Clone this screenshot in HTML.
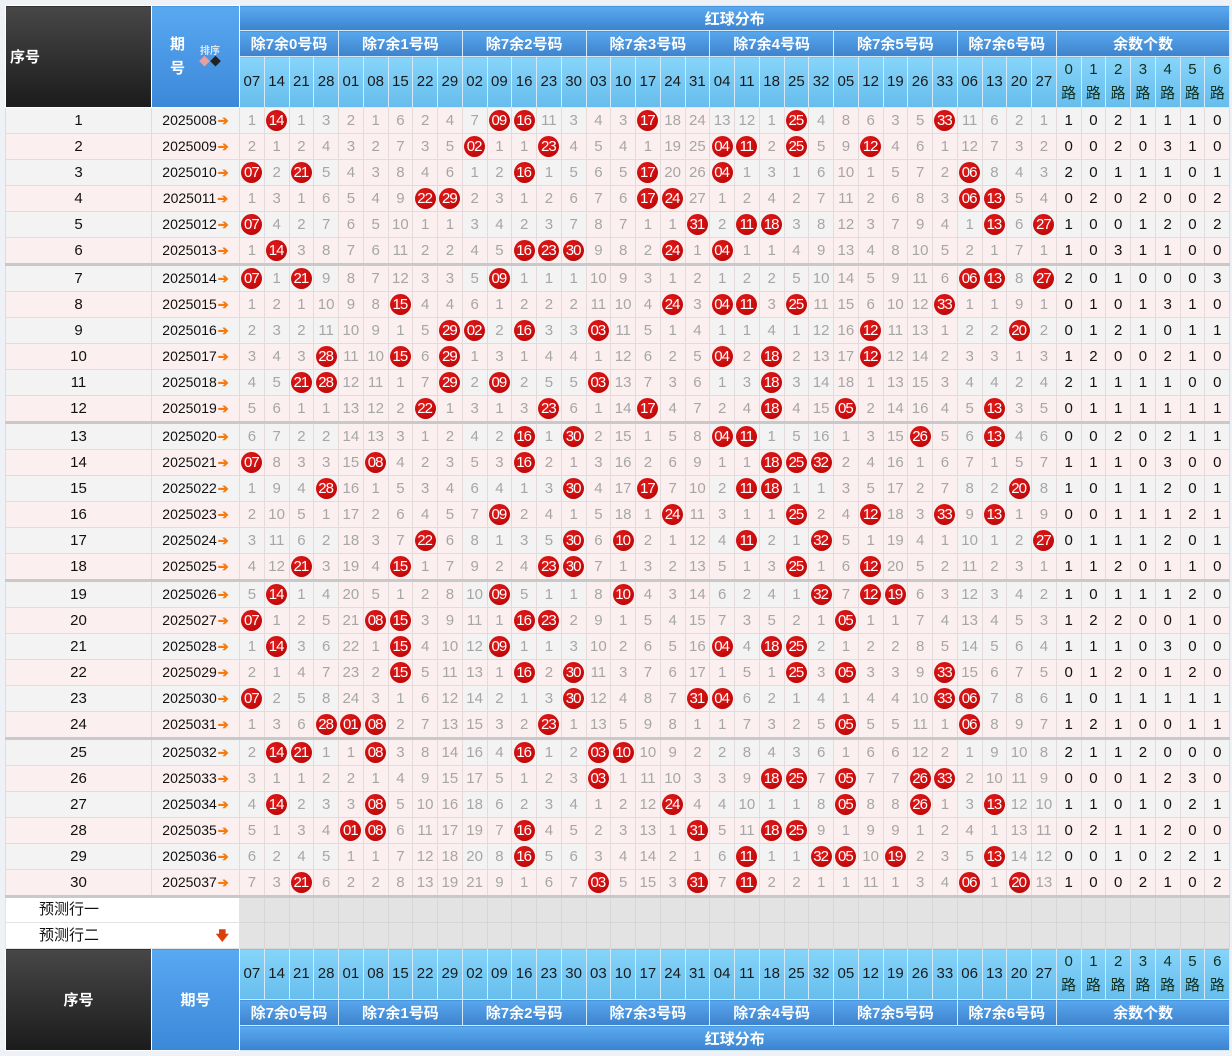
<!DOCTYPE html>
<html><head><meta charset="utf-8">
<style>
body{margin:0;background:#eef2f7;width:1232px;height:1056px;overflow:hidden;font-family:"Liberation Sans","Noto Sans CJK SC",sans-serif;position:relative}
table{position:absolute;left:5px;top:5px;border-collapse:collapse;table-layout:fixed;width:1224px}
td{padding:0;text-align:center;border:1px solid #e3dbdb;font-size:15px;color:#a6a6a6;white-space:nowrap;overflow:hidden;line-height:24px;background:#fcefef}
tbody tr{height:26px}
tr.o td{background:#f3f3f3}
tr.o td:nth-child(n+7):nth-child(-n+11),tr.o td:nth-child(n+17):nth-child(-n+21),tr.o td:nth-child(n+27):nth-child(-n+31){background:#fcefef}
td:nth-child(1){color:#111}
td:nth-child(2){color:#111;font-size:14px}
td:nth-child(n+36){color:#111}
tr.s td{border-bottom:3px solid #c9c9c9}
b.a{color:#f57a10;font-size:13px;font-weight:bold;margin-left:1px}
i{display:inline-block;width:21px;height:21px;border-radius:50%;background:radial-gradient(circle at 40% 35%,#e21c1c,#b50000);color:#fff;font-style:normal;font-size:15px;line-height:21px;letter-spacing:-1px;text-indent:-1px;vertical-align:middle}
th{padding:0;font-weight:bold;color:#fff;font-size:15px;border:1px solid #d6e9f8;white-space:nowrap}
th.k{background:linear-gradient(#474747,#1b1b1b);border-color:#fff;text-align:left;padding-left:4px}
th.q{background:linear-gradient(#58a8f2,#3c88d8);border-color:#fff}
th.t{background:linear-gradient(#5aaaf0,#3b82cf);height:24px}
th.g{background:linear-gradient(#58a7ee,#3d82cc);height:25px}
th.n{background:linear-gradient(#86d4fa,#66bdec);color:#1a1a1a;font-weight:normal;height:50px;line-height:24px}
th.n.c{color:#0f2f1f}
tr.p{height:26px}
tr.p td{background:#e3e3e3;border-color:#d6d6d6}
tr.p td.l{background:#fff;color:#111;text-align:left;padding-left:33px;border-color:#e3e3e3}
.dn{float:right;margin-right:10px;color:#d9400c;font-size:13px;font-weight:bold}
.qh{display:flex;align-items:center;justify-content:center;gap:14px}
.qh .v{line-height:24px;font-size:15px}
.so{font-size:10px;color:#dce6f2;line-height:11px;text-align:center;font-weight:bold}
.so span{font-size:11px}
</style></head><body>
<table>
<colgroup><col style="width:146px"><col style="width:88px"><col span="40" style="width:24.75px"></colgroup>
<thead>
<tr><th rowspan="3" class="k">序号</th><th rowspan="3" class="q"><div class="qh"><div class="v">期<br>号</div><div class="so">排序<br><span style="color:#e6a0a0">◆</span><span style="color:#222">◆</span></div></div></th><th colspan="40" class="t">红球分布</th></tr>
<tr><th colspan="4" class="g">除7余0号码</th><th colspan="5" class="g">除7余1号码</th><th colspan="5" class="g">除7余2号码</th><th colspan="5" class="g">除7余3号码</th><th colspan="5" class="g">除7余4号码</th><th colspan="5" class="g">除7余5号码</th><th colspan="4" class="g">除7余6号码</th><th colspan="7" class="g">余数个数</th></tr>
<tr><th class="n">07</th><th class="n">14</th><th class="n">21</th><th class="n">28</th><th class="n">01</th><th class="n">08</th><th class="n">15</th><th class="n">22</th><th class="n">29</th><th class="n">02</th><th class="n">09</th><th class="n">16</th><th class="n">23</th><th class="n">30</th><th class="n">03</th><th class="n">10</th><th class="n">17</th><th class="n">24</th><th class="n">31</th><th class="n">04</th><th class="n">11</th><th class="n">18</th><th class="n">25</th><th class="n">32</th><th class="n">05</th><th class="n">12</th><th class="n">19</th><th class="n">26</th><th class="n">33</th><th class="n">06</th><th class="n">13</th><th class="n">20</th><th class="n">27</th><th class="n c">0<br>路</th><th class="n c">1<br>路</th><th class="n c">2<br>路</th><th class="n c">3<br>路</th><th class="n c">4<br>路</th><th class="n c">5<br>路</th><th class="n c">6<br>路</th></tr>
</thead>
<tbody>
<tr class="o"><td>1</td><td>2025008<b class="a">➔</b></td><td>1</td><td><i>14</i></td><td>1</td><td>3</td><td>2</td><td>1</td><td>6</td><td>2</td><td>4</td><td>7</td><td><i>09</i></td><td><i>16</i></td><td>11</td><td>3</td><td>4</td><td>3</td><td><i>17</i></td><td>18</td><td>24</td><td>13</td><td>12</td><td>1</td><td><i>25</i></td><td>4</td><td>8</td><td>6</td><td>3</td><td>5</td><td><i>33</i></td><td>11</td><td>6</td><td>2</td><td>1</td><td>1</td><td>0</td><td>2</td><td>1</td><td>1</td><td>1</td><td>0</td></tr>
<tr><td>2</td><td>2025009<b class="a">➔</b></td><td>2</td><td>1</td><td>2</td><td>4</td><td>3</td><td>2</td><td>7</td><td>3</td><td>5</td><td><i>02</i></td><td>1</td><td>1</td><td><i>23</i></td><td>4</td><td>5</td><td>4</td><td>1</td><td>19</td><td>25</td><td><i>04</i></td><td><i>11</i></td><td>2</td><td><i>25</i></td><td>5</td><td>9</td><td><i>12</i></td><td>4</td><td>6</td><td>1</td><td>12</td><td>7</td><td>3</td><td>2</td><td>0</td><td>0</td><td>2</td><td>0</td><td>3</td><td>1</td><td>0</td></tr>
<tr class="o"><td>3</td><td>2025010<b class="a">➔</b></td><td><i>07</i></td><td>2</td><td><i>21</i></td><td>5</td><td>4</td><td>3</td><td>8</td><td>4</td><td>6</td><td>1</td><td>2</td><td><i>16</i></td><td>1</td><td>5</td><td>6</td><td>5</td><td><i>17</i></td><td>20</td><td>26</td><td><i>04</i></td><td>1</td><td>3</td><td>1</td><td>6</td><td>10</td><td>1</td><td>5</td><td>7</td><td>2</td><td><i>06</i></td><td>8</td><td>4</td><td>3</td><td>2</td><td>0</td><td>1</td><td>1</td><td>1</td><td>0</td><td>1</td></tr>
<tr><td>4</td><td>2025011<b class="a">➔</b></td><td>1</td><td>3</td><td>1</td><td>6</td><td>5</td><td>4</td><td>9</td><td><i>22</i></td><td><i>29</i></td><td>2</td><td>3</td><td>1</td><td>2</td><td>6</td><td>7</td><td>6</td><td><i>17</i></td><td><i>24</i></td><td>27</td><td>1</td><td>2</td><td>4</td><td>2</td><td>7</td><td>11</td><td>2</td><td>6</td><td>8</td><td>3</td><td><i>06</i></td><td><i>13</i></td><td>5</td><td>4</td><td>0</td><td>2</td><td>0</td><td>2</td><td>0</td><td>0</td><td>2</td></tr>
<tr class="o"><td>5</td><td>2025012<b class="a">➔</b></td><td><i>07</i></td><td>4</td><td>2</td><td>7</td><td>6</td><td>5</td><td>10</td><td>1</td><td>1</td><td>3</td><td>4</td><td>2</td><td>3</td><td>7</td><td>8</td><td>7</td><td>1</td><td>1</td><td><i>31</i></td><td>2</td><td><i>11</i></td><td><i>18</i></td><td>3</td><td>8</td><td>12</td><td>3</td><td>7</td><td>9</td><td>4</td><td>1</td><td><i>13</i></td><td>6</td><td><i>27</i></td><td>1</td><td>0</td><td>0</td><td>1</td><td>2</td><td>0</td><td>2</td></tr>
<tr class="s"><td>6</td><td>2025013<b class="a">➔</b></td><td>1</td><td><i>14</i></td><td>3</td><td>8</td><td>7</td><td>6</td><td>11</td><td>2</td><td>2</td><td>4</td><td>5</td><td><i>16</i></td><td><i>23</i></td><td><i>30</i></td><td>9</td><td>8</td><td>2</td><td><i>24</i></td><td>1</td><td><i>04</i></td><td>1</td><td>1</td><td>4</td><td>9</td><td>13</td><td>4</td><td>8</td><td>10</td><td>5</td><td>2</td><td>1</td><td>7</td><td>1</td><td>1</td><td>0</td><td>3</td><td>1</td><td>1</td><td>0</td><td>0</td></tr>
<tr class="o"><td>7</td><td>2025014<b class="a">➔</b></td><td><i>07</i></td><td>1</td><td><i>21</i></td><td>9</td><td>8</td><td>7</td><td>12</td><td>3</td><td>3</td><td>5</td><td><i>09</i></td><td>1</td><td>1</td><td>1</td><td>10</td><td>9</td><td>3</td><td>1</td><td>2</td><td>1</td><td>2</td><td>2</td><td>5</td><td>10</td><td>14</td><td>5</td><td>9</td><td>11</td><td>6</td><td><i>06</i></td><td><i>13</i></td><td>8</td><td><i>27</i></td><td>2</td><td>0</td><td>1</td><td>0</td><td>0</td><td>0</td><td>3</td></tr>
<tr><td>8</td><td>2025015<b class="a">➔</b></td><td>1</td><td>2</td><td>1</td><td>10</td><td>9</td><td>8</td><td><i>15</i></td><td>4</td><td>4</td><td>6</td><td>1</td><td>2</td><td>2</td><td>2</td><td>11</td><td>10</td><td>4</td><td><i>24</i></td><td>3</td><td><i>04</i></td><td><i>11</i></td><td>3</td><td><i>25</i></td><td>11</td><td>15</td><td>6</td><td>10</td><td>12</td><td><i>33</i></td><td>1</td><td>1</td><td>9</td><td>1</td><td>0</td><td>1</td><td>0</td><td>1</td><td>3</td><td>1</td><td>0</td></tr>
<tr class="o"><td>9</td><td>2025016<b class="a">➔</b></td><td>2</td><td>3</td><td>2</td><td>11</td><td>10</td><td>9</td><td>1</td><td>5</td><td><i>29</i></td><td><i>02</i></td><td>2</td><td><i>16</i></td><td>3</td><td>3</td><td><i>03</i></td><td>11</td><td>5</td><td>1</td><td>4</td><td>1</td><td>1</td><td>4</td><td>1</td><td>12</td><td>16</td><td><i>12</i></td><td>11</td><td>13</td><td>1</td><td>2</td><td>2</td><td><i>20</i></td><td>2</td><td>0</td><td>1</td><td>2</td><td>1</td><td>0</td><td>1</td><td>1</td></tr>
<tr><td>10</td><td>2025017<b class="a">➔</b></td><td>3</td><td>4</td><td>3</td><td><i>28</i></td><td>11</td><td>10</td><td><i>15</i></td><td>6</td><td><i>29</i></td><td>1</td><td>3</td><td>1</td><td>4</td><td>4</td><td>1</td><td>12</td><td>6</td><td>2</td><td>5</td><td><i>04</i></td><td>2</td><td><i>18</i></td><td>2</td><td>13</td><td>17</td><td><i>12</i></td><td>12</td><td>14</td><td>2</td><td>3</td><td>3</td><td>1</td><td>3</td><td>1</td><td>2</td><td>0</td><td>0</td><td>2</td><td>1</td><td>0</td></tr>
<tr class="o"><td>11</td><td>2025018<b class="a">➔</b></td><td>4</td><td>5</td><td><i>21</i></td><td><i>28</i></td><td>12</td><td>11</td><td>1</td><td>7</td><td><i>29</i></td><td>2</td><td><i>09</i></td><td>2</td><td>5</td><td>5</td><td><i>03</i></td><td>13</td><td>7</td><td>3</td><td>6</td><td>1</td><td>3</td><td><i>18</i></td><td>3</td><td>14</td><td>18</td><td>1</td><td>13</td><td>15</td><td>3</td><td>4</td><td>4</td><td>2</td><td>4</td><td>2</td><td>1</td><td>1</td><td>1</td><td>1</td><td>0</td><td>0</td></tr>
<tr class="s"><td>12</td><td>2025019<b class="a">➔</b></td><td>5</td><td>6</td><td>1</td><td>1</td><td>13</td><td>12</td><td>2</td><td><i>22</i></td><td>1</td><td>3</td><td>1</td><td>3</td><td><i>23</i></td><td>6</td><td>1</td><td>14</td><td><i>17</i></td><td>4</td><td>7</td><td>2</td><td>4</td><td><i>18</i></td><td>4</td><td>15</td><td><i>05</i></td><td>2</td><td>14</td><td>16</td><td>4</td><td>5</td><td><i>13</i></td><td>3</td><td>5</td><td>0</td><td>1</td><td>1</td><td>1</td><td>1</td><td>1</td><td>1</td></tr>
<tr class="o"><td>13</td><td>2025020<b class="a">➔</b></td><td>6</td><td>7</td><td>2</td><td>2</td><td>14</td><td>13</td><td>3</td><td>1</td><td>2</td><td>4</td><td>2</td><td><i>16</i></td><td>1</td><td><i>30</i></td><td>2</td><td>15</td><td>1</td><td>5</td><td>8</td><td><i>04</i></td><td><i>11</i></td><td>1</td><td>5</td><td>16</td><td>1</td><td>3</td><td>15</td><td><i>26</i></td><td>5</td><td>6</td><td><i>13</i></td><td>4</td><td>6</td><td>0</td><td>0</td><td>2</td><td>0</td><td>2</td><td>1</td><td>1</td></tr>
<tr><td>14</td><td>2025021<b class="a">➔</b></td><td><i>07</i></td><td>8</td><td>3</td><td>3</td><td>15</td><td><i>08</i></td><td>4</td><td>2</td><td>3</td><td>5</td><td>3</td><td><i>16</i></td><td>2</td><td>1</td><td>3</td><td>16</td><td>2</td><td>6</td><td>9</td><td>1</td><td>1</td><td><i>18</i></td><td><i>25</i></td><td><i>32</i></td><td>2</td><td>4</td><td>16</td><td>1</td><td>6</td><td>7</td><td>1</td><td>5</td><td>7</td><td>1</td><td>1</td><td>1</td><td>0</td><td>3</td><td>0</td><td>0</td></tr>
<tr class="o"><td>15</td><td>2025022<b class="a">➔</b></td><td>1</td><td>9</td><td>4</td><td><i>28</i></td><td>16</td><td>1</td><td>5</td><td>3</td><td>4</td><td>6</td><td>4</td><td>1</td><td>3</td><td><i>30</i></td><td>4</td><td>17</td><td><i>17</i></td><td>7</td><td>10</td><td>2</td><td><i>11</i></td><td><i>18</i></td><td>1</td><td>1</td><td>3</td><td>5</td><td>17</td><td>2</td><td>7</td><td>8</td><td>2</td><td><i>20</i></td><td>8</td><td>1</td><td>0</td><td>1</td><td>1</td><td>2</td><td>0</td><td>1</td></tr>
<tr><td>16</td><td>2025023<b class="a">➔</b></td><td>2</td><td>10</td><td>5</td><td>1</td><td>17</td><td>2</td><td>6</td><td>4</td><td>5</td><td>7</td><td><i>09</i></td><td>2</td><td>4</td><td>1</td><td>5</td><td>18</td><td>1</td><td><i>24</i></td><td>11</td><td>3</td><td>1</td><td>1</td><td><i>25</i></td><td>2</td><td>4</td><td><i>12</i></td><td>18</td><td>3</td><td><i>33</i></td><td>9</td><td><i>13</i></td><td>1</td><td>9</td><td>0</td><td>0</td><td>1</td><td>1</td><td>1</td><td>2</td><td>1</td></tr>
<tr class="o"><td>17</td><td>2025024<b class="a">➔</b></td><td>3</td><td>11</td><td>6</td><td>2</td><td>18</td><td>3</td><td>7</td><td><i>22</i></td><td>6</td><td>8</td><td>1</td><td>3</td><td>5</td><td><i>30</i></td><td>6</td><td><i>10</i></td><td>2</td><td>1</td><td>12</td><td>4</td><td><i>11</i></td><td>2</td><td>1</td><td><i>32</i></td><td>5</td><td>1</td><td>19</td><td>4</td><td>1</td><td>10</td><td>1</td><td>2</td><td><i>27</i></td><td>0</td><td>1</td><td>1</td><td>1</td><td>2</td><td>0</td><td>1</td></tr>
<tr class="s"><td>18</td><td>2025025<b class="a">➔</b></td><td>4</td><td>12</td><td><i>21</i></td><td>3</td><td>19</td><td>4</td><td><i>15</i></td><td>1</td><td>7</td><td>9</td><td>2</td><td>4</td><td><i>23</i></td><td><i>30</i></td><td>7</td><td>1</td><td>3</td><td>2</td><td>13</td><td>5</td><td>1</td><td>3</td><td><i>25</i></td><td>1</td><td>6</td><td><i>12</i></td><td>20</td><td>5</td><td>2</td><td>11</td><td>2</td><td>3</td><td>1</td><td>1</td><td>1</td><td>2</td><td>0</td><td>1</td><td>1</td><td>0</td></tr>
<tr class="o"><td>19</td><td>2025026<b class="a">➔</b></td><td>5</td><td><i>14</i></td><td>1</td><td>4</td><td>20</td><td>5</td><td>1</td><td>2</td><td>8</td><td>10</td><td><i>09</i></td><td>5</td><td>1</td><td>1</td><td>8</td><td><i>10</i></td><td>4</td><td>3</td><td>14</td><td>6</td><td>2</td><td>4</td><td>1</td><td><i>32</i></td><td>7</td><td><i>12</i></td><td><i>19</i></td><td>6</td><td>3</td><td>12</td><td>3</td><td>4</td><td>2</td><td>1</td><td>0</td><td>1</td><td>1</td><td>1</td><td>2</td><td>0</td></tr>
<tr><td>20</td><td>2025027<b class="a">➔</b></td><td><i>07</i></td><td>1</td><td>2</td><td>5</td><td>21</td><td><i>08</i></td><td><i>15</i></td><td>3</td><td>9</td><td>11</td><td>1</td><td><i>16</i></td><td><i>23</i></td><td>2</td><td>9</td><td>1</td><td>5</td><td>4</td><td>15</td><td>7</td><td>3</td><td>5</td><td>2</td><td>1</td><td><i>05</i></td><td>1</td><td>1</td><td>7</td><td>4</td><td>13</td><td>4</td><td>5</td><td>3</td><td>1</td><td>2</td><td>2</td><td>0</td><td>0</td><td>1</td><td>0</td></tr>
<tr class="o"><td>21</td><td>2025028<b class="a">➔</b></td><td>1</td><td><i>14</i></td><td>3</td><td>6</td><td>22</td><td>1</td><td><i>15</i></td><td>4</td><td>10</td><td>12</td><td><i>09</i></td><td>1</td><td>1</td><td>3</td><td>10</td><td>2</td><td>6</td><td>5</td><td>16</td><td><i>04</i></td><td>4</td><td><i>18</i></td><td><i>25</i></td><td>2</td><td>1</td><td>2</td><td>2</td><td>8</td><td>5</td><td>14</td><td>5</td><td>6</td><td>4</td><td>1</td><td>1</td><td>1</td><td>0</td><td>3</td><td>0</td><td>0</td></tr>
<tr><td>22</td><td>2025029<b class="a">➔</b></td><td>2</td><td>1</td><td>4</td><td>7</td><td>23</td><td>2</td><td><i>15</i></td><td>5</td><td>11</td><td>13</td><td>1</td><td><i>16</i></td><td>2</td><td><i>30</i></td><td>11</td><td>3</td><td>7</td><td>6</td><td>17</td><td>1</td><td>5</td><td>1</td><td><i>25</i></td><td>3</td><td><i>05</i></td><td>3</td><td>3</td><td>9</td><td><i>33</i></td><td>15</td><td>6</td><td>7</td><td>5</td><td>0</td><td>1</td><td>2</td><td>0</td><td>1</td><td>2</td><td>0</td></tr>
<tr class="o"><td>23</td><td>2025030<b class="a">➔</b></td><td><i>07</i></td><td>2</td><td>5</td><td>8</td><td>24</td><td>3</td><td>1</td><td>6</td><td>12</td><td>14</td><td>2</td><td>1</td><td>3</td><td><i>30</i></td><td>12</td><td>4</td><td>8</td><td>7</td><td><i>31</i></td><td><i>04</i></td><td>6</td><td>2</td><td>1</td><td>4</td><td>1</td><td>4</td><td>4</td><td>10</td><td><i>33</i></td><td><i>06</i></td><td>7</td><td>8</td><td>6</td><td>1</td><td>0</td><td>1</td><td>1</td><td>1</td><td>1</td><td>1</td></tr>
<tr class="s"><td>24</td><td>2025031<b class="a">➔</b></td><td>1</td><td>3</td><td>6</td><td><i>28</i></td><td><i>01</i></td><td><i>08</i></td><td>2</td><td>7</td><td>13</td><td>15</td><td>3</td><td>2</td><td><i>23</i></td><td>1</td><td>13</td><td>5</td><td>9</td><td>8</td><td>1</td><td>1</td><td>7</td><td>3</td><td>2</td><td>5</td><td><i>05</i></td><td>5</td><td>5</td><td>11</td><td>1</td><td><i>06</i></td><td>8</td><td>9</td><td>7</td><td>1</td><td>2</td><td>1</td><td>0</td><td>0</td><td>1</td><td>1</td></tr>
<tr class="o"><td>25</td><td>2025032<b class="a">➔</b></td><td>2</td><td><i>14</i></td><td><i>21</i></td><td>1</td><td>1</td><td><i>08</i></td><td>3</td><td>8</td><td>14</td><td>16</td><td>4</td><td><i>16</i></td><td>1</td><td>2</td><td><i>03</i></td><td><i>10</i></td><td>10</td><td>9</td><td>2</td><td>2</td><td>8</td><td>4</td><td>3</td><td>6</td><td>1</td><td>6</td><td>6</td><td>12</td><td>2</td><td>1</td><td>9</td><td>10</td><td>8</td><td>2</td><td>1</td><td>1</td><td>2</td><td>0</td><td>0</td><td>0</td></tr>
<tr><td>26</td><td>2025033<b class="a">➔</b></td><td>3</td><td>1</td><td>1</td><td>2</td><td>2</td><td>1</td><td>4</td><td>9</td><td>15</td><td>17</td><td>5</td><td>1</td><td>2</td><td>3</td><td><i>03</i></td><td>1</td><td>11</td><td>10</td><td>3</td><td>3</td><td>9</td><td><i>18</i></td><td><i>25</i></td><td>7</td><td><i>05</i></td><td>7</td><td>7</td><td><i>26</i></td><td><i>33</i></td><td>2</td><td>10</td><td>11</td><td>9</td><td>0</td><td>0</td><td>0</td><td>1</td><td>2</td><td>3</td><td>0</td></tr>
<tr class="o"><td>27</td><td>2025034<b class="a">➔</b></td><td>4</td><td><i>14</i></td><td>2</td><td>3</td><td>3</td><td><i>08</i></td><td>5</td><td>10</td><td>16</td><td>18</td><td>6</td><td>2</td><td>3</td><td>4</td><td>1</td><td>2</td><td>12</td><td><i>24</i></td><td>4</td><td>4</td><td>10</td><td>1</td><td>1</td><td>8</td><td><i>05</i></td><td>8</td><td>8</td><td><i>26</i></td><td>1</td><td>3</td><td><i>13</i></td><td>12</td><td>10</td><td>1</td><td>1</td><td>0</td><td>1</td><td>0</td><td>2</td><td>1</td></tr>
<tr><td>28</td><td>2025035<b class="a">➔</b></td><td>5</td><td>1</td><td>3</td><td>4</td><td><i>01</i></td><td><i>08</i></td><td>6</td><td>11</td><td>17</td><td>19</td><td>7</td><td><i>16</i></td><td>4</td><td>5</td><td>2</td><td>3</td><td>13</td><td>1</td><td><i>31</i></td><td>5</td><td>11</td><td><i>18</i></td><td><i>25</i></td><td>9</td><td>1</td><td>9</td><td>9</td><td>1</td><td>2</td><td>4</td><td>1</td><td>13</td><td>11</td><td>0</td><td>2</td><td>1</td><td>1</td><td>2</td><td>0</td><td>0</td></tr>
<tr class="o"><td>29</td><td>2025036<b class="a">➔</b></td><td>6</td><td>2</td><td>4</td><td>5</td><td>1</td><td>1</td><td>7</td><td>12</td><td>18</td><td>20</td><td>8</td><td><i>16</i></td><td>5</td><td>6</td><td>3</td><td>4</td><td>14</td><td>2</td><td>1</td><td>6</td><td><i>11</i></td><td>1</td><td>1</td><td><i>32</i></td><td><i>05</i></td><td>10</td><td><i>19</i></td><td>2</td><td>3</td><td>5</td><td><i>13</i></td><td>14</td><td>12</td><td>0</td><td>0</td><td>1</td><td>0</td><td>2</td><td>2</td><td>1</td></tr>
<tr class="s"><td>30</td><td>2025037<b class="a">➔</b></td><td>7</td><td>3</td><td><i>21</i></td><td>6</td><td>2</td><td>2</td><td>8</td><td>13</td><td>19</td><td>21</td><td>9</td><td>1</td><td>6</td><td>7</td><td><i>03</i></td><td>5</td><td>15</td><td>3</td><td><i>31</i></td><td>7</td><td><i>11</i></td><td>2</td><td>2</td><td>1</td><td>1</td><td>11</td><td>1</td><td>3</td><td>4</td><td><i>06</i></td><td>1</td><td><i>20</i></td><td>13</td><td>1</td><td>0</td><td>0</td><td>2</td><td>1</td><td>0</td><td>2</td></tr>
<tr class="p"><td colspan="2" class="l">预测行一</td><td></td><td></td><td></td><td></td><td></td><td></td><td></td><td></td><td></td><td></td><td></td><td></td><td></td><td></td><td></td><td></td><td></td><td></td><td></td><td></td><td></td><td></td><td></td><td></td><td></td><td></td><td></td><td></td><td></td><td></td><td></td><td></td><td></td><td></td><td></td><td></td><td></td><td></td><td></td><td></td></tr>
<tr class="p"><td colspan="2" class="l">预测行二<span class="dn">🡇</span></td><td></td><td></td><td></td><td></td><td></td><td></td><td></td><td></td><td></td><td></td><td></td><td></td><td></td><td></td><td></td><td></td><td></td><td></td><td></td><td></td><td></td><td></td><td></td><td></td><td></td><td></td><td></td><td></td><td></td><td></td><td></td><td></td><td></td><td></td><td></td><td></td><td></td><td></td><td></td><td></td></tr>
</tbody>
<tfoot>
<tr><th rowspan="3" class="k" style="text-align:center;padding:0">序号</th><th rowspan="3" class="q">期号</th><th class="n">07</th><th class="n">14</th><th class="n">21</th><th class="n">28</th><th class="n">01</th><th class="n">08</th><th class="n">15</th><th class="n">22</th><th class="n">29</th><th class="n">02</th><th class="n">09</th><th class="n">16</th><th class="n">23</th><th class="n">30</th><th class="n">03</th><th class="n">10</th><th class="n">17</th><th class="n">24</th><th class="n">31</th><th class="n">04</th><th class="n">11</th><th class="n">18</th><th class="n">25</th><th class="n">32</th><th class="n">05</th><th class="n">12</th><th class="n">19</th><th class="n">26</th><th class="n">33</th><th class="n">06</th><th class="n">13</th><th class="n">20</th><th class="n">27</th><th class="n c">0<br>路</th><th class="n c">1<br>路</th><th class="n c">2<br>路</th><th class="n c">3<br>路</th><th class="n c">4<br>路</th><th class="n c">5<br>路</th><th class="n c">6<br>路</th></tr>
<tr><th colspan="4" class="g">除7余0号码</th><th colspan="5" class="g">除7余1号码</th><th colspan="5" class="g">除7余2号码</th><th colspan="5" class="g">除7余3号码</th><th colspan="5" class="g">除7余4号码</th><th colspan="5" class="g">除7余5号码</th><th colspan="4" class="g">除7余6号码</th><th colspan="7" class="g">余数个数</th></tr>
<tr><th colspan="40" class="t">红球分布</th></tr>
</tfoot>
</table>
</body></html>
